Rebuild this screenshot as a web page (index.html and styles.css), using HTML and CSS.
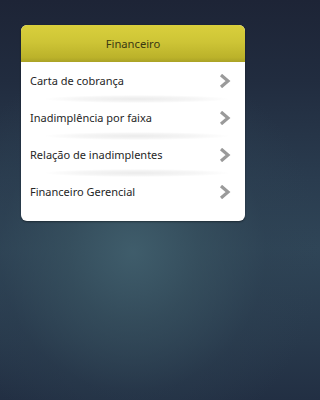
FILE: index.html
```html
<!DOCTYPE html>
<html lang="pt">
<head>
<meta charset="utf-8">
<link rel="stylesheet" href="styles.css">
</head>
<body>
<div class="card">
  <div class="header">Financeiro</div>
  <ul class="menu">
    <li class="item"><span class="label">Carta de cobrança</span><svg class="chev" viewBox="0 0 12 14"><path d="M2 1 L9 7 L2 13" fill="none" stroke="#9a9a9a" stroke-width="3.2" stroke-linejoin="miter"/></svg></li>
    <li class="item"><span class="label">Inadimplência por faixa</span><svg class="chev" viewBox="0 0 12 14"><path d="M2 1 L9 7 L2 13" fill="none" stroke="#9a9a9a" stroke-width="3.2" stroke-linejoin="miter"/></svg></li>
    <li class="item"><span class="label">Relação de inadimplentes</span><svg class="chev" viewBox="0 0 12 14"><path d="M2 1 L9 7 L2 13" fill="none" stroke="#9a9a9a" stroke-width="3.2" stroke-linejoin="miter"/></svg></li>
    <li class="item"><span class="label">Financeiro Gerencial</span><svg class="chev" viewBox="0 0 12 14"><path d="M2 1 L9 7 L2 13" fill="none" stroke="#9a9a9a" stroke-width="3.2" stroke-linejoin="miter"/></svg></li>
  </ul>
</div>
</body>
</html>
```
FILE: styles.css
```css
html {
  margin: 0;
  padding: 0;
  min-height: 100%;
  background:
    radial-gradient(ellipse 190px 200px at 133px 252px, rgba(64,94,108,0.95) 0%, rgba(56,82,96,0.7) 35%, rgba(45,65,82,0.35) 70%, rgba(40,58,75,0) 100%),
    linear-gradient(#1d2436 0%, #212c3f 20%, #2a3c4f 45%, #2f4557 62%, #28394c 85%, #222f43 100%);
  background-color: #222f43;
}
body {
  margin: 0;
  min-height: 400px;
  font-family: "Noto Sans", "Open Sans", sans-serif;
  padding-top: 25px;
  box-sizing: border-box;
}
.card {
  width: 224px;
  margin-left: 21px;
  background: #fff;
  border-radius: 6px;
  overflow: hidden;
  padding-bottom: 11px;
  box-shadow: 0 1px 2px rgba(0,0,0,0.4);
}
.header {
  height: 37px;
  display: flex;
  align-items: center;
  justify-content: center;
  background: linear-gradient(#d9cf3c 0%, #cec536 45%, #bbb22a 88%, #aaa226 100%);
  color: #3a3812;
  font-size: 11.2px;
}
.menu {
  list-style: none;
  margin: 0;
  padding: 0;
}
.item {
  position: relative;
  height: 37px;
  display: flex;
  align-items: center;
  justify-content: space-between;
  padding: 0 14px 0 9px;
  color: #262626;
  font-size: 11px;
}
.item + .item::before {
  content: "";
  position: absolute;
  left: 24px;
  right: 16px;
  top: -4px;
  height: 8px;
  background: radial-gradient(ellipse at center, rgba(0,0,0,0.08) 0%, rgba(0,0,0,0.04) 45%, rgba(0,0,0,0) 72%);
}
.chev {
  width: 12px;
  height: 14px;
}
```
